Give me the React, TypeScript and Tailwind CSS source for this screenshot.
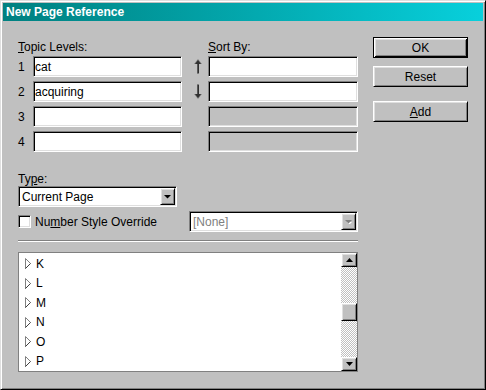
const sunken =
  "border border-t-[#808080] border-l-[#808080] border-b-white border-r-white shadow-[inset_1px_1px_0_#000,inset_-1px_-1px_0_#dfdfdf]";
const raised =
  "border border-t-white border-l-white border-b-black border-r-black shadow-[inset_1px_1px_0_#dfdfdf,inset_-1px_-1px_0_#808080]";
const dither =
  "bg-[image:repeating-conic-gradient(#c0c0c0_0_25%,#ffffff_0_50%)] bg-[length:2px_2px]";

function ComboButton({ disabled }: { disabled?: boolean }) {
  return (
    <div className={`w-[15px] h-full bg-[#c0c0c0] flex items-center justify-center ${raised}`}>
      <svg width="7" height="4" viewBox="0 0 7 4">
        {disabled && <path d="M2 2h5L4.5 4.5z" fill="#fff" />}
        <path d="M0 0h7L3.5 3.5z" fill={disabled ? "#808080" : "#000"} />
      </svg>
    </div>
  );
}

function ArrowUp() {
  return (
    <svg width="8" height="15" viewBox="0 0 8 15">
      <path d="M4 0L8 5H5V15H3V5H0Z" fill="#808080" />
      <path d="M4 1L7 5H5V14H3.5V5H1Z" fill="#303030" />
    </svg>
  );
}

function ArrowDown() {
  return (
    <svg width="8" height="15" viewBox="0 0 8 15">
      <path d="M4 15L8 10H5V0H3V10H0Z" fill="#808080" />
      <path d="M4 14L7 10H5V1H3.5V10H1Z" fill="#303030" />
    </svg>
  );
}

function Tri() {
  return (
    <svg width="7" height="11" viewBox="0 0 7 11">
      <path d="M0.5 0.5L5.5 5.5L0.5 10.5Z" fill="#fff" stroke="#808080" />
      <path d="M5.5 5.5L0.5 10.5" stroke="#404040" />
    </svg>
  );
}

function Input({ value, disabled }: { value?: string; disabled?: boolean }) {
  return (
    <div
      className={`h-[21px] flex items-center pl-[1px] ${disabled ? "bg-[#c0c0c0]" : "bg-white"} ${sunken}`}
    >
      {value}
    </div>
  );
}

export default function App() {
  const rows = [
    { n: "1", topic: "cat", arrow: <ArrowUp /> },
    { n: "2", topic: "acquiring", arrow: <ArrowDown /> },
    { n: "3", topic: "", arrow: null },
    { n: "4", topic: "", arrow: null },
  ];
  const items = ["K", "L", "M", "N", "O", "P"];

  return (
    <div className="w-[486px] h-[390px] bg-[#c0c0c0] p-[2px] border border-t-[#dfdfdf] border-l-[#dfdfdf] border-b-black border-r-black shadow-[inset_1px_1px_0_#fff,inset_-1px_-1px_0_#808080] font-['Liberation_Sans',Arial,sans-serif] text-[12px] text-black leading-[14px]">
      <div className="h-[18px] bg-linear-to-r from-[#008080] to-[#08d0dc] pl-[3px] text-white font-bold text-[12px] leading-[18px]">
        New Page Reference
      </div>

      <div className="flex">
        <div className="w-[340px] ml-[15px] pt-[19px] flex flex-col">
          <div className="grid grid-cols-[15px_149px_26px_150px] h-[14px] mb-[2px]">
            <span className="col-span-2">
              <u>T</u>opic Levels:
            </span>
            <span />
            <span>
              <u>S</u>ort By:
            </span>
          </div>

          <div className="grid grid-cols-[15px_149px_26px_150px] gap-y-[4px]">
            {rows.map((r, i) => (
              <div key={r.n} className="contents">
                <div className="h-[21px] flex items-center">{r.n}</div>
                <Input value={r.topic} />
                <div className="h-[21px] flex items-center pl-[12px]">{r.arrow}</div>
                <Input disabled={i > 1} />
              </div>
            ))}
          </div>

          <div className="mt-[20px] h-[14px]">
            Ty<u>p</u>e:
          </div>
          <div className={`w-[159px] h-[21px] bg-white flex items-center p-[1px] ${sunken}`}>
            <span className="flex-1 pl-[2px]">Current Page</span>
            <ComboButton />
          </div>

          <div className="mt-[4px] h-[21px] flex items-center">
            <div className="w-[171px] flex items-center gap-[4px]">
              <div className={`w-[13px] h-[13px] bg-white ${sunken}`} />
              <span>
                Nu<u>m</u>ber Style Override
              </span>
            </div>
            <div className={`w-[169px] h-[21px] bg-white flex items-center p-[1px] ${sunken}`}>
              <span className="flex-1 pl-[2px] text-[#808080]">[None]</span>
              <ComboButton disabled />
            </div>
          </div>

          <div className="mt-[8px] h-[2px] border-t border-t-[#808080] border-b border-b-white" />

          <div className="mt-[10px] h-[120px] bg-white border border-[#808080] flex">
            <div className="flex-1 flex flex-col pt-[1px]">
              {items.map((it) => (
                <div key={it} className="h-[20px] flex items-center pl-[6px] gap-[4px]">
                  <Tri />
                  <span>{it}</span>
                </div>
              ))}
            </div>
            <div className="w-[16px] flex flex-col">
              <div className={`h-[14px] bg-[#c0c0c0] flex items-center justify-center ${raised}`}>
                <svg width="7" height="4" viewBox="0 0 7 4">
                  <path d="M3.5 0L7 4H0Z" fill="#000" />
                </svg>
              </div>
              <div className={`h-[36px] ${dither}`} />
              <div className={`h-[18px] bg-[#c0c0c0] ${raised}`} />
              <div className={`flex-1 ${dither}`} />
              <div className={`h-[14px] bg-[#c0c0c0] flex items-center justify-center ${raised}`}>
                <svg width="7" height="4" viewBox="0 0 7 4">
                  <path d="M0 0H7L3.5 4Z" fill="#000" />
                </svg>
              </div>
            </div>
          </div>
        </div>

        <div className="ml-[15px] pt-[16px] flex flex-col w-[95px]">
          <button className="h-[21px] bg-[#c0c0c0] border border-black shadow-[inset_1px_1px_0_#fff,inset_-1px_-1px_0_#000,inset_2px_2px_0_#dfdfdf,inset_-2px_-2px_0_#808080] text-center">
            OK
          </button>
          <button className={`mt-[8px] h-[21px] bg-[#c0c0c0] text-center ${raised}`}>Reset</button>
          <button className={`mt-[14px] h-[21px] bg-[#c0c0c0] text-center ${raised}`}>
            <u>A</u>dd
          </button>
        </div>
      </div>
    </div>
  );
}
